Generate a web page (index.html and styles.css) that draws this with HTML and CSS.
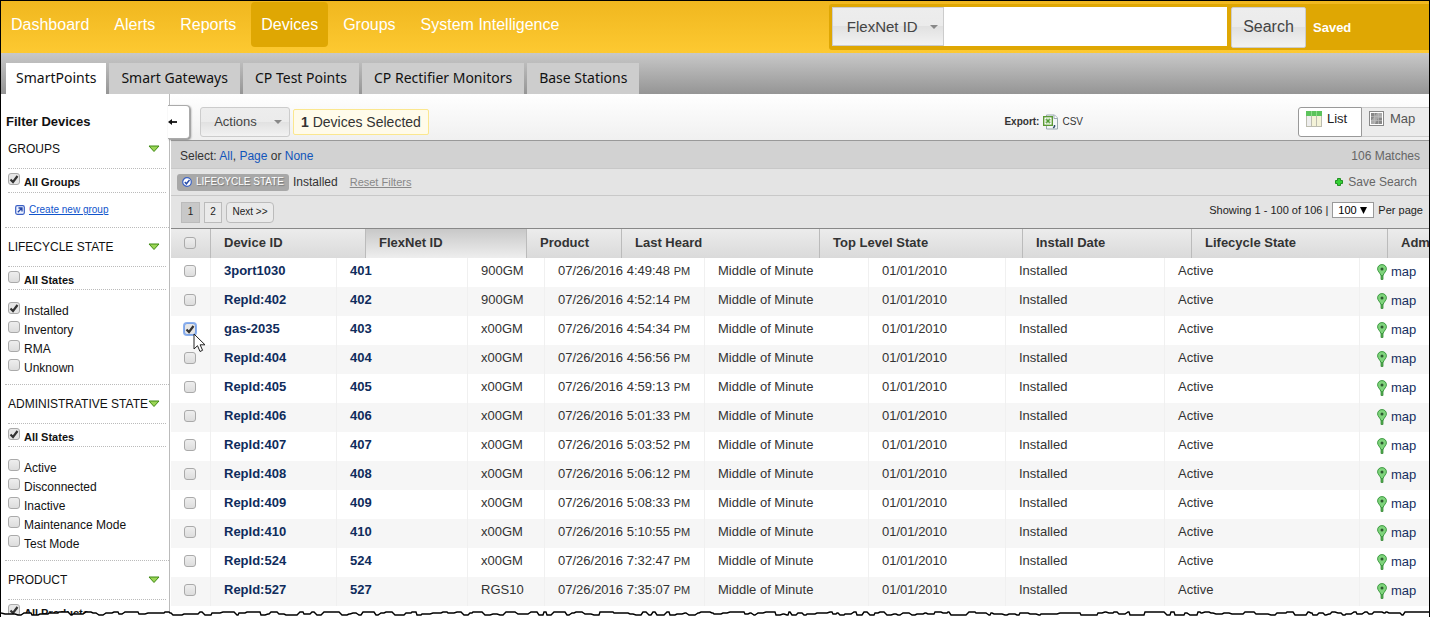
FILE: index.html
```
<!DOCTYPE html>
<html lang="en">
<head>
<meta charset="utf-8">
<title>Devices - SmartPoints</title>
<link rel="stylesheet" href="styles.css">
</head>
<body>
<svg class="defs" aria-hidden="true">
  <symbol id="pin" viewBox="0 0 10 16"><path d="M4 9v6.500h2V9z" fill="#4fae4c" stroke="#3c8a3c" stroke-width=".8"/><path d="M5 .6C2.400.6.6 2.400.6 4.900c0 2.300 2.200 3.600 3.400 6.600h2c1.200-3 3.400-4.300 3.400-6.600C9.400 2.400 7.600.6 5 .6z" fill="#7fd47c" stroke="#3f9a43"/><circle cx="5" cy="4.900" r="1.500" fill="#2d5a30"/></symbol>
  <symbol id="tri" viewBox="0 0 12 8"><path d="M1 1h10L6 6.500z" fill="#9bd556" stroke="#3f8a12"/></symbol>
</svg>
<div class="app">
  <header class="top">
    <nav class="mainnav">
      <a href="#">Dashboard</a><a href="#">Alerts</a><a href="#">Reports</a><a href="#" class="on">Devices</a><a href="#">Groups</a><a href="#">System Intelligence</a>
    </nav>
    <form class="search">
      <button type="button" class="btn kind">FlexNet ID<i class="caret"></i></button>
      <input type="text" class="query" aria-label="Search text">
      <button type="button" class="btn go">Search</button>
      <a href="#" class="saved">Saved</a>
    </form>
  </header>
  <nav class="tabs">
    <a href="#" class="on">SmartPoints</a><a href="#">Smart Gateways</a><a href="#">CP Test Points</a><a href="#">CP Rectifier Monitors</a><a href="#">Base Stations</a>
  </nav>
  <div class="body">
    <aside class="side">
      <h2>Filter Devices</h2>
      <section class="first">
        <h3>GROUPS<svg class="tri"><use href="#tri"/></svg></h3>
        <label class="all"><input type="checkbox" checked><span>All Groups</span></label>
        <p class="create"><svg viewBox="0 0 10 10"><rect x=".7" y=".7" width="8.600" height="8.600" rx="1.500" fill="#eef3ff" stroke="#3a5fc4" stroke-width="1.200"/><path d="M2.800 7.200L6.500 3.500M3.500 3h3.500v3.500" fill="none" stroke="#2346a8" stroke-width="1.300"/></svg><a href="#">Create new group</a></p>
      </section>
      <section>
        <h3>LIFECYCLE STATE<svg class="tri"><use href="#tri"/></svg></h3>
        <label class="all"><input type="checkbox"><span>All States</span></label>
        <div class="opts">
          <label><input type="checkbox" checked><span>Installed</span></label>
          <label><input type="checkbox"><span>Inventory</span></label>
          <label><input type="checkbox"><span>RMA</span></label>
          <label><input type="checkbox"><span>Unknown</span></label>
        </div>
      </section>
      <section>
        <h3>ADMINISTRATIVE STATE<svg class="tri"><use href="#tri"/></svg></h3>
        <label class="all"><input type="checkbox" checked><span>All States</span></label>
        <div class="opts">
          <label><input type="checkbox"><span>Active</span></label>
          <label><input type="checkbox"><span>Disconnected</span></label>
          <label><input type="checkbox"><span>Inactive</span></label>
          <label><input type="checkbox"><span>Maintenance Mode</span></label>
          <label><input type="checkbox"><span>Test Mode</span></label>
        </div>
      </section>
      <section>
        <h3>PRODUCT<svg class="tri"><use href="#tri"/></svg></h3>
        <label class="all"><input type="checkbox" checked><span>All Products</span></label>
      </section>
    </aside>
    <main class="main">
      <button type="button" class="fold" aria-label="Collapse filters"><svg viewBox="0 0 9 8"><path d="M2 4h7" stroke="#111" stroke-width="1.800"/><path d="M0 4l4-3v6z" fill="#111"/></svg></button>
      <div class="tools">
        <button type="button" class="btn actions">Actions<i class="caret"></i></button>
        <span class="picked"><b>1</b> Devices Selected</span>
        <span class="export"><b>Export:</b>
          <svg viewBox="0 0 15 16"><path d="M3.500 1h8l3 3v11h-11z" fill="#f3f6f7" stroke="#9aa9b0"/><path d="M11 1v3.500h3.500" fill="#fff" stroke="#9aa9b0"/><rect x=".7" y="2.700" width="8.600" height="8.600" fill="#fff" stroke="#5c9a35" stroke-width="1.400"/><path d="M3 5l4 4M7 5L3 9" stroke="#4f9a34" stroke-width="1.600"/><path d="M3 5h4v4H3z" fill="none" stroke="#8cc06c" stroke-width=".6"/><path d="M11.500 11v1.500l-1.200 1.500" fill="none" stroke="#33506a" stroke-width="1.500"/></svg>
          <a href="#">CSV</a></span>
        <div class="views">
          <button type="button" class="view on"><svg viewBox="0 0 16 16"><rect width="16" height="16" fill="#bdbdb0"/><path d="M0 0h16v5H0z" fill="#5cc35c"/><path d="M1 5h4v10H1z" fill="#eee"/><path d="M6 5h4v10H6zM11 5h4v10h-4z" fill="#f4f3d8"/><path d="M5.500 0v5M10.500 0v5" stroke="#8bdc88"/></svg>List</button>
          <button type="button" class="view"><svg viewBox="0 0 16 16"><rect x=".5" y=".5" width="14" height="14" fill="#fff" stroke="#888"/><path d="M2 2h11v11H2z" fill="#aaa"/><path d="M2 2h6L2 10zM9 7h4v6H6z" fill="#888"/><path d="M2 5.500h11M2 9.500h11M5.500 2v11M9.500 2v11" stroke="#bbb" stroke-width=".7"/></svg>Map</button>
        </div>
      </div>
      <div class="bar select"><span>Select: <a href="#">All</a>, <a href="#">Page</a> or <a href="#">None</a></span><span class="matches">106 Matches</span></div>
      <div class="bar filters">
        <span class="tag"><svg viewBox="0 0 10 10"><circle cx="5" cy="5" r="4.300" fill="#fff" stroke="#3b62c4" stroke-width="1.200"/><path d="M2.800 5l1.600 1.800L7.500 3" fill="none" stroke="#2448a8" stroke-width="1.400"/></svg>LIFECYCLE STATE</span>
        <span class="value">Installed</span><a href="#" class="reset">Reset Filters</a>
        <a href="#" class="save"><svg viewBox="0 0 8 8"><path d="M2.500.5h3v2h2v3h-2v2h-3v-2h-2v-3h2z" fill="#35d135" stroke="#229022"/></svg>Save Search</a>
      </div>
      <div class="bar pager">
        <button type="button" class="pg cur">1</button><button type="button" class="pg">2</button><button type="button" class="pg next">Next &gt;&gt;</button>
        <label class="per">Showing 1 - 100 of 106 | <select><option>100</option></select> Per page</label>
      </div>
      <table class="grid head">
        <colgroup><col class="h0"><col class="h1"><col class="h2"><col class="h3"><col class="h4"><col class="h5"><col class="h6"><col class="h7"><col></colgroup>
        <thead><tr><th><input type="checkbox" aria-label="Select all"></th><th>Device ID</th><th class="sort">FlexNet ID</th><th>Product</th><th>Last Heard</th><th>Top Level State</th><th>Install Date</th><th>Lifecycle State</th><th>Adm</th></tr></thead>
      </table>
      <table class="grid rows">
        <colgroup><col class="h0"><col class="c1"><col class="c2"><col class="c3"><col class="c4"><col class="c5"><col class="c6"><col class="c7"><col class="c8"><col></colgroup>
        <tbody id="rows"></tbody>
      </table>
    </main>
  </div>
  <svg class="cursor" viewBox="0 0 13 20"><path d="M1 1v15l3.500-3.300L7 18.500l2.600-1.200-2.500-5.500H12z" fill="#fff" stroke="#222"/></svg>
  <svg class="tear" id="tear" aria-hidden="true"></svg>
</div>
<script src="app.js"></script>
</body>
</html>
```
FILE: styles.css
```
* { box-sizing: border-box; }
body { margin: 0; background: #fff; font: 13px/16px "Liberation Sans", Arial, sans-serif; color: #333; }
a { text-decoration: none; color: inherit; }
button { font: inherit; color: inherit; margin: 0; }
.defs { display: none; }
.app { position: relative; height: 100vh; overflow: hidden; display: flex; flex-direction: column; border: 1px solid #000; border-bottom: 0; }
.top { display: flex; justify-content: space-between; flex: none; height: 52px; background: linear-gradient(#f0b71f, #fdc931); }
.mainnav { display: flex; padding-top: 1px; }
.mainnav a { height: 45px; padding: 0 10px; margin-right: 5px; border-radius: 4px; font-size: 16px; line-height: 46px; color: #fff; }
.mainnav .on { background: #dfa703; }
.search { display: flex; align-items: flex-start; flex: none; width: 42%; height: 46px; margin-top: 3px; padding: 3px 0 0 3px; background: #dfa703; border-radius: 3px 0 0 3px; }
.btn { display: flex; align-items: center; justify-content: center; border: 1px solid #ccc; background: linear-gradient(#ededed, #ebebeb 50%, #e1e1e1 50%, #f2f2f2); color: #444; }
.caret { border: 4px solid transparent; border-top-color: #888; border-bottom: 0; }
.kind { width: 112px; height: 39px; font-size: 15px; gap: 12px; padding: 0 0 0 8px; }
.query { flex: 1; min-width: 0; height: 39px; border: 0; background: #fff; }
.go { width: 75px; height: 41px; margin-left: 4px; padding: 0 0 2px; font-size: 16px; border-radius: 2px; }
.saved { width: 123px; padding: 13px 0 0 7px; font-weight: bold; color: #fff; }
.tabs { display: flex; flex: none; gap: 3px; height: 41px; padding: 10px 0 0 5px; background: linear-gradient(#c8c8c8, #959595); font: 14px/30px "Noto Sans", sans-serif; color: #111; }
.tabs a { padding: 0 12px; background: #cdcdcd; }
.tabs .on { padding: 0 10px; background: #fff; }
.body { display: flex; flex: 1; min-height: 0; overflow: hidden; }
.side { width: 169px; flex: none; border-right: 1px solid #bbb; color: #111; font-size: 12px; }
.side h2 { margin: 0; padding: 20px 0 0 5px; font: bold 13px/15px "Liberation Sans", sans-serif; }
.side section { margin-left: 4px; border-bottom: 1px dotted #bbb; }
.side h3 { display: flex; align-items: center; justify-content: space-between; height: 38px; margin: 0 9px 0 0; padding-left: 3px; font-weight: normal; font-size: 12px; white-space: nowrap; }
.side .first h3 { height: 39px; }
.tri { flex: none; width: 12px; height: 8px; }
.side label { display: flex; align-items: flex-start; gap: 4px; padding-left: 3px; height: 19px; }
.side label span { padding-top: 1px; }
.side .all { height: 24px; margin: 0 3px 0 3px; padding: 4px 0 0; border: 1px dotted #bbb; border-width: 1px 0; font-weight: bold; font-size: 11px; }
.side .first .all { height: 25px; }
.opts { padding: 12px 0 6px; }
input[type=checkbox] { appearance: none; flex: none; width: 12px; height: 12px; margin: 0; border: 1px solid #aaa; border-radius: 3px; background: linear-gradient(#eee, #ddd); }
input[type=checkbox]:checked { background: url("data:image/svg+xml,%3Csvg xmlns='http://www.w3.org/2000/svg' viewBox='0 0 10 10'%3E%3Cpath d='M1.500 5.500L4 8l4.500-6' fill='none' stroke='%23333' stroke-width='2.200'/%3E%3C/svg%3E") center/10px no-repeat, #e6e6e6; }
.create { display: flex; align-items: center; gap: 4px; height: 34px; margin: 0; padding-left: 10px; font-size: 10px; color: #1155cc; }
.create svg { width: 10px; height: 10px; }
.create a { text-decoration: underline; }
.main { position: relative; flex: 1; min-width: 0; padding-left: 1px; }
.fold { position: absolute; left: -2px; top: 11px; width: 22px; height: 34px; padding: 0; border: 1px solid #aaa; border-left: 0; border-radius: 0 4px 4px 0; background: #fff; box-shadow: 1px 1px 2px #888; text-align: left; }
.fold svg { width: 9px; height: 8px; }
.tools { display: flex; align-items: center; height: 47px; padding: 9px 0 0 29px; background: linear-gradient(#fff, #f0f0f0); border-bottom: 1px solid #999; }
.actions { width: 90px; height: 30px; border-radius: 3px; gap: 17px; padding: 0 0 0 6px; }
.picked { margin-left: 3px; padding: 3px 7px; border: 1px solid #fbe78f; border-radius: 2px; background: #fffbea; font-size: 14px; line-height: 18px; }
.export { display: flex; align-items: center; gap: 4px; margin-left: auto; font-size: 10px; }
.export svg { width: 15px; height: 16px; }
.views { display: flex; margin-left: 215px; }
.view { display: flex; align-items: center; gap: 5px; width: 67px; height: 30px; padding: 0 0 5px 7px; border: 1px solid #ccc; border-left: 0; border-right: 0; background: #ececec; color: #555; }
.view.on { width: 64px; border: 1px solid #999; border-radius: 3px 0 0 3px; background: #fff; color: #222; }
.view svg { width: 16px; height: 16px; }
.bar { display: flex; align-items: center; background: #e4e4e4; border-bottom: 1px solid #c8c8c8; padding: 0 9px; font-size: 12px; }
.select { height: 28px; padding-top: 2px; justify-content: space-between; background: #d2d2d2; }
.select a { color: #1155bb; }
.matches { color: #666; }
.filters { height: 27px; padding: 0 12px 0 6px; }
.tag { display: flex; align-items: center; gap: 4px; height: 17px; padding: 0 5px; border-radius: 3px; background: #a8a8a8; color: #fff; font-size: 10px; text-shadow: 1px 1px 1px #777; }
.tag svg { width: 10px; height: 10px; }
.value { margin: 0 12px 0 4px; }
.reset { color: #888; text-decoration: underline; font-size: 11px; }
.save { display: flex; align-items: center; gap: 5px; margin-left: auto; color: #666; }
.save svg { width: 8px; height: 8px; }
.pager { height: 33px; gap: 4px; border-color: #888; padding: 0 6px 0 10px; font-size: 11px; color: #222; }
.pg { height: 21px; width: 18px; padding: 0; border: 1px solid #bbb; background: #eaeaea; font-size: 10px; }
.pg.cur { background: #c8c8c8; width: 19px; }
.pg.next { width: 48px; border-radius: 4px; }
.per { display: flex; align-items: center; gap: 4px; margin-left: auto; padding-bottom: 4px; }
.per select { appearance: none; width: 42px; height: 16px; margin: 0; padding: 0 0 0 5px; border: 1px solid #999; border-radius: 0; background: url("data:image/svg+xml,%3Csvg xmlns='http://www.w3.org/2000/svg' viewBox='0 0 7 7'%3E%3Cpath d='M0 0h7L3.500 7z'/%3E%3C/svg%3E") right 6px center/7px no-repeat, #fff; font: 11px/14px "Liberation Sans", sans-serif; }
.grid { width: 100%; table-layout: fixed; border-collapse: separate; border-spacing: 0; }
.grid th, .grid td { padding: 0 0 0 13px; text-align: left; white-space: nowrap; overflow: hidden; }
.grid th { height: 29px; padding-bottom: 1px; border-right: 1px solid #bbb; background: linear-gradient(#ececec, #dadada); }
.grid th.sort { background: linear-gradient(#c8c8c8, #eee); }
.grid td { height: 29px; border-right: 1px solid #f0f0f0; padding-bottom: 3px; }
.grid td:last-child, .grid th:last-child { border-right: 0; }
.grid td:last-child { padding-left: 17px; }
.rows tr:nth-child(even) { background: #f6f6f6; }
.rows b { color: #0f2c5c; }
.rows small { font-size: 11px; }
.rows a { display: flex; align-items: center; gap: 4px; padding-top: 2px; color: #16305f; }
.rows svg { width: 10px; height: 16px; }
.grid input { display: block; }
.rows input:focus { outline: 0; border-color: #7ba3e8; box-shadow: 0 0 0 1px #8bb0ee; }
.h0 { width: 40px; } .h1 { width: 155px; } .h2 { width: 161px; } .h3 { width: 95px; } .h4 { width: 198px; } .h5 { width: 203px; } .h6 { width: 169px; } .h7 { width: 196px; }
.c1 { width: 126px; } .c2 { width: 131px; } .c3 { width: 77px; } .c4 { width: 160px; } .c5 { width: 164px; } .c6 { width: 137px; } .c7 { width: 159px; } .c8 { width: 195px; }
.cursor { position: absolute; left: 192px; top: 332px; width: 13px; height: 20px; }
.tear { position: absolute; left: 0; bottom: 0; width: 100%; height: 6px; }
```
FILE: app.js
```
const data = [
  ["3port1030", "401", "900GM", "4:49:48"], ["RepId:402", "402", "900GM", "4:52:14"],
  ["gas-2035", "403", "x00GM", "4:54:34"], ["RepId:404", "404", "x00GM", "4:56:56"],
  ["RepId:405", "405", "x00GM", "4:59:13"], ["RepId:406", "406", "x00GM", "5:01:33"],
  ["RepId:407", "407", "x00GM", "5:03:52"], ["RepId:408", "408", "x00GM", "5:06:12"],
  ["RepId:409", "409", "x00GM", "5:08:33"], ["RepId:410", "410", "x00GM", "5:10:55"],
  ["RepId:524", "524", "x00GM", "7:32:47"], ["RepId:527", "527", "RGS10", "7:35:07"]
];
document.getElementById("rows").innerHTML = data.map(([id, flex, product, time]) => `
  <tr><td><input type="checkbox" aria-label="Select ${id}"${id === "gas-2035" ? " checked" : ""}></td>
  <td><b>${id}</b></td><td><b>${flex}</b></td><td>${product}</td><td>07/26/2016 ${time} <small>PM</small></td>
  <td>Middle of Minute</td><td>01/01/2010</td><td>Installed</td><td>Active</td>
  <td><a href="#"><svg><use href="#pin"/></svg>map</a></td></tr>`).join("");
document.querySelector(".rows input:checked").focus();

// Torn lower edge: short flat runs joined by small irregular steps.
const tear = document.getElementById("tear");
const width = tear.clientWidth;
let seed = 7;
const next = n => (seed = (seed * 1103 + 12345) % 65521) % n;
let line = "M0 2";
let x = 4;
while (x < width - 18) {
  const y = 1 + next(4);
  line += `L${x} ${y}`;
  x += 1 + next(6);
  line += `L${x} ${y}`;
  x += 1 + next(3);
}
line += `L${width - 14} 1H${width}`;
tear.innerHTML = `<path d="${line}V12H0Z" fill="#fff"/><path d="${line}" fill="none" stroke="#000" stroke-width="1.400"/>`;
```
